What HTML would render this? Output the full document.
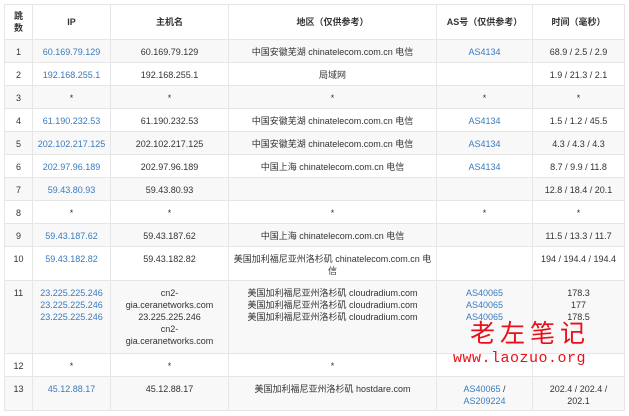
<!DOCTYPE html>
<html><head><meta charset="utf-8"><style>
body{margin:0;width:629px;height:416px;background:#fff;overflow:hidden;position:relative;font-family:"Liberation Sans","Noto Sans CJK SC",sans-serif;}
table{position:absolute;left:4px;top:4px;border-collapse:collapse;table-layout:fixed;width:620px;font-size:9px;color:#333;}
td,th{border:1px solid #e6e6e6;text-align:center;vertical-align:top;padding:6px 2px 0;line-height:12px;box-sizing:border-box;}
th{font-weight:bold;vertical-align:middle;padding:0;}
tr.g td{background:#f8f8f8}
a{color:#3a7bbf;text-decoration:none}
.w1{position:absolute;left:470px;top:317px;color:#e8101a;font-size:25px;letter-spacing:5px;font-family:"Noto Sans CJK SC",sans-serif;line-height:30px}
.w2{position:absolute;left:453px;top:350px;color:#e8101a;font-size:15px;font-family:"Liberation Mono",monospace;line-height:18px;letter-spacing:0.5px}
</style></head><body>
<table>
<colgroup><col style="width:28px"><col style="width:78px"><col style="width:118px"><col style="width:208px"><col style="width:96px"><col style="width:92px"></colgroup>
<tr style="height:35px"><th>跳<br>数</th><th>IP</th><th>主机名</th><th>地区（仅供参考）</th><th>AS号（仅供参考）</th><th>时间（毫秒）</th></tr>
<tr class="g" style="height:23px"><td>1</td><td><a>60.169.79.129</a></td><td>60.169.79.129</td><td>中国安徽芜湖 chinatelecom.com.cn 电信</td><td><a>AS4134</a></td><td>68.9 / 2.5 / 2.9</td></tr>
<tr style="height:23px"><td>2</td><td><a>192.168.255.1</a></td><td>192.168.255.1</td><td>局域网</td><td></td><td>1.9 / 21.3 / 2.1</td></tr>
<tr class="g" style="height:23px"><td>3</td><td>*</td><td>*</td><td>*</td><td>*</td><td>*</td></tr>
<tr style="height:23px"><td>4</td><td><a>61.190.232.53</a></td><td>61.190.232.53</td><td>中国安徽芜湖 chinatelecom.com.cn 电信</td><td><a>AS4134</a></td><td>1.5 / 1.2 / 45.5</td></tr>
<tr class="g" style="height:23px"><td>5</td><td><a>202.102.217.125</a></td><td>202.102.217.125</td><td>中国安徽芜湖 chinatelecom.com.cn 电信</td><td><a>AS4134</a></td><td>4.3 / 4.3 / 4.3</td></tr>
<tr style="height:23px"><td>6</td><td><a>202.97.96.189</a></td><td>202.97.96.189</td><td>中国上海 chinatelecom.com.cn 电信</td><td><a>AS4134</a></td><td>8.7 / 9.9 / 11.8</td></tr>
<tr class="g" style="height:23px"><td>7</td><td><a>59.43.80.93</a></td><td>59.43.80.93</td><td></td><td></td><td>12.8 / 18.4 / 20.1</td></tr>
<tr style="height:23px"><td>8</td><td>*</td><td>*</td><td>*</td><td>*</td><td>*</td></tr>
<tr class="g" style="height:23px"><td>9</td><td><a>59.43.187.62</a></td><td>59.43.187.62</td><td>中国上海 chinatelecom.com.cn 电信</td><td></td><td>11.5 / 13.3 / 11.7</td></tr>
<tr style="height:34px"><td>10</td><td><a>59.43.182.82</a></td><td>59.43.182.82</td><td>美国加利福尼亚州洛杉矶 chinatelecom.com.cn 电信</td><td></td><td>194 / 194.4 / 194.4</td></tr>
<tr class="g" style="height:73px"><td>11</td><td><a>23.225.225.246<br>23.225.225.246<br>23.225.225.246</a></td><td>cn2-<br>gia.ceranetworks.com<br>23.225.225.246<br>cn2-<br>gia.ceranetworks.com</td><td>美国加利福尼亚州洛杉矶 cloudradium.com<br>美国加利福尼亚州洛杉矶 cloudradium.com<br>美国加利福尼亚州洛杉矶 cloudradium.com</td><td><a>AS40065<br>AS40065<br>AS40065</a></td><td>178.3<br>177<br>178.5</td></tr>
<tr style="height:23px"><td>12</td><td>*</td><td>*</td><td>*</td><td></td><td></td></tr>
<tr class="g" style="height:34px"><td>13</td><td><a>45.12.88.17</a></td><td>45.12.88.17</td><td>美国加利福尼亚州洛杉矶 hostdare.com</td><td><a>AS40065</a> /<br><a>AS209224</a></td><td>202.4 / 202.4 /<br>202.1</td></tr>
</table>
<div class="w1">老左笔记</div>
<div class="w2">www.laozuo.org</div>
</body></html>
